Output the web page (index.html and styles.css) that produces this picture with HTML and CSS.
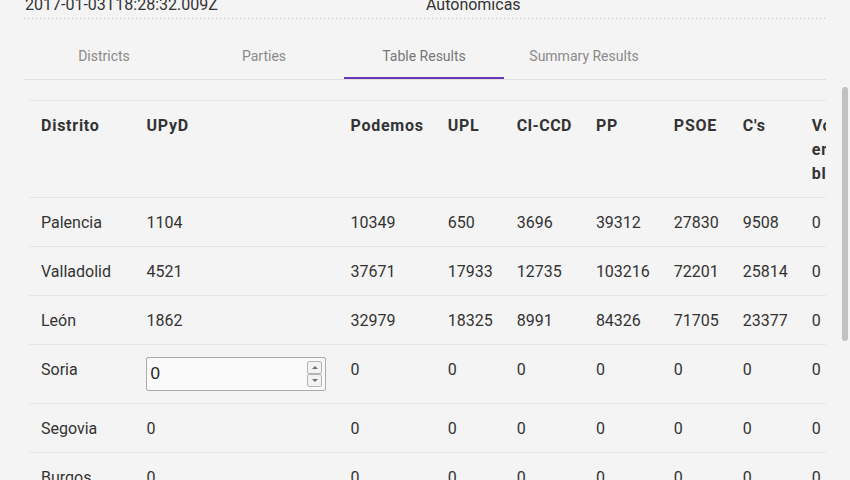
FILE: index.html
```html
<!DOCTYPE html>
<html lang="es">
<head>
<meta charset="utf-8">
<title>Table Results</title>
<link rel="stylesheet" href="styles.css">
</head>
<body>
<div class="page">
  <div class="meta">
    <span>2017-01-03T18:28:32.009Z</span>
    <span>Autonomicas</span>
  </div>
  <div class="tabs">
    <div class="tab">Districts</div>
    <div class="tab">Parties</div>
    <div class="tab active">Table Results</div>
    <div class="tab">Summary Results</div>
  </div>
  <div class="table-wrap">
    <table class="results">
      <thead>
        <tr><th>Distrito</th><th>UPyD</th><th>Podemos</th><th>UPL</th><th class="nowrap">CI-CCD</th><th>PP</th><th>PSOE</th><th>C's</th><th>Votos en blanco</th><th>Votos nulos</th></tr>
      </thead>
      <tbody>
        <tr><td>Palencia</td><td>1104</td><td>10349</td><td>650</td><td>3696</td><td>39312</td><td>27830</td><td>9508</td><td>0</td><td>0</td></tr>
        <tr><td>Valladolid</td><td>4521</td><td>37671</td><td>17933</td><td>12735</td><td>103216</td><td>72201</td><td>25814</td><td>0</td><td>0</td></tr>
        <tr><td>León</td><td>1862</td><td>32979</td><td>18325</td><td>8991</td><td>84326</td><td>71705</td><td>23377</td><td>0</td><td>0</td></tr>
        <tr class="edit-row"><td>Soria</td><td><div class="num-input"><input type="text" value="0"><div class="spin"><span class="spin-btn up"></span><span class="spin-btn down"></span></div></div></td><td>0</td><td>0</td><td>0</td><td>0</td><td>0</td><td>0</td><td>0</td><td>0</td></tr>
        <tr><td>Segovia</td><td>0</td><td>0</td><td>0</td><td>0</td><td>0</td><td>0</td><td>0</td><td>0</td><td>0</td></tr>
        <tr><td>Burgos</td><td>0</td><td>0</td><td>0</td><td>0</td><td>0</td><td>0</td><td>0</td><td>0</td><td>0</td></tr>
        <tr><td>Salamanca</td><td>0</td><td>0</td><td>0</td><td>0</td><td>0</td><td>0</td><td>0</td><td>0</td><td>0</td></tr>
        <tr><td>Zamora</td><td>0</td><td>0</td><td>0</td><td>0</td><td>0</td><td>0</td><td>0</td><td>0</td><td>0</td></tr>
        <tr><td>Ávila</td><td>0</td><td>0</td><td>0</td><td>0</td><td>0</td><td>0</td><td>0</td><td>0</td><td>0</td></tr>
      </tbody>
    </table>
  </div>
</div>
<div class="scroll-thumb"></div>
</body>
</html>
```
FILE: styles.css
```css
html, body {
  margin: 0;
  height: 100%;
  overflow: hidden;
}
body {
  background: #f4f4f4;
  font-family: Roboto, "Liberation Sans", sans-serif;
  color: #333;
}
.page {
  padding: 0 24px;
  margin-top: -7px;
}
.meta {
  display: grid;
  grid-template-columns: 1fr 1fr;
  font-size: 16px;
  line-height: 24px;
  padding-bottom: 2px;
  background-image: linear-gradient(to right, #c4c4c4 1px, transparent 1px);
  background-size: 4px 1px;
  background-repeat: repeat-x;
  background-position: left bottom;
}
.meta span { padding-left: 1px; }
.tabs {
  display: flex;
  margin-top: 12px;
  border-bottom: 1px solid #e0e0e0;
}
.tab {
  width: 160px;
  height: 48px;
  line-height: 50px;
  text-align: center;
  font-size: 14px;
  color: #8a8a8a;
}
.tab.active {
  color: #777;
  box-shadow: inset 0 -2px 0 #673ab7;
}
.table-wrap {
  margin-top: 20px;
  margin-left: 5px;
  overflow: hidden;
}
.results {
  width: 1px;
  border-collapse: collapse;
  border-top: 1px solid #e6e6e6;
}
.results th, .results td {
  padding: 13px 12px 11px;
  text-align: left;
  vertical-align: top;
  font-size: 16px;
  line-height: 24px;
  border-bottom: 1px solid #e6e6e6;
  color: #333;
}
.results tr > :first-child { padding-right: 14px; }
.results th {
  font-weight: 700;
  letter-spacing: 0.75px;
}
.results th.nowrap {
  white-space: nowrap;
  letter-spacing: 0.4px;
}
.results .edit-row td:nth-child(2) {
  padding-top: 12px;
  padding-bottom: 12px;
}
.num-input {
  display: flex;
  width: 180px;
  height: 34px;
  box-sizing: border-box;
  border: 1px solid #ababab;
  border-radius: 2px;
  background: #fafafa;
}
.num-input input {
  flex: 1;
  min-width: 0;
  border: none;
  background: transparent;
  padding: 0 0 0 3px;
  margin: 0;
  font-family: "Liberation Sans", Arial, sans-serif;
  font-size: 17px;
  color: #222;
  outline: none;
}
.spin {
  display: flex;
  flex-direction: column;
  width: 15px;
  margin: 3px 3px 3px 0;
}
.spin-btn {
  flex: 1;
  display: flex;
  align-items: center;
  justify-content: center;
  border: 1px solid #b5b5b5;
  border-radius: 2px;
  background: #f2f2f2;
}
.spin-btn.up::before {
  content: "";
  border-left: 3px solid transparent;
  border-right: 3px solid transparent;
  border-bottom: 3px solid #6e6e6e;
}
.spin-btn.down::before {
  content: "";
  border-left: 3px solid transparent;
  border-right: 3px solid transparent;
  border-top: 3px solid #6e6e6e;
}
.scroll-thumb {
  position: fixed;
  left: 842px;
  top: 87px;
  width: 6px;
  height: 254px;
  border-radius: 3px;
  background: #c1c1c1;
}
```
